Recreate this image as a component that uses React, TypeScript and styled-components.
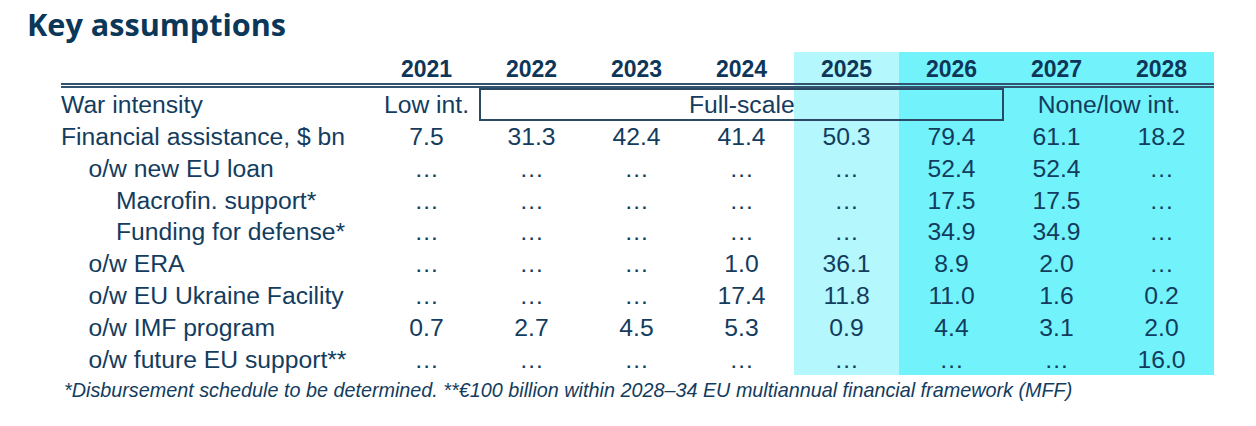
import React from 'react';
import styled, { createGlobalStyle } from 'styled-components';

const GlobalStyle = createGlobalStyle`
  html, body { margin: 0; padding: 0; background: #ffffff; }
  body { font-family: "Liberation Sans", Arial, sans-serif; }
`;

type Band = 'none' | 'light' | 'dark';
const bandColor: Record<Band, string> = {
  none: 'transparent',
  light: '#B4F7FC',
  dark: '#72F3FB',
};

const Page = styled.div`
  width: 1256px;
  height: 426px;
  overflow: hidden;
  padding-top: 6px;
  box-sizing: border-box;
`;

const Title = styled.h1`
  margin: 0 0 0 27px;
  font-family: "Open Sans", sans-serif;
  font-weight: 700;
  font-size: 30.6px;
  line-height: 36px;
  color: #0b3759;
`;

const Table = styled.div`
  margin: 10px 0 0 61px;
  display: grid;
  grid-template-columns: 313px repeat(8, 105px);
  color: #133c5e;
  font-size: 24.7px;
`;

const HeadCell = styled.div<{ $band: Band }>`
  height: 36px;
  box-sizing: border-box;
  padding-top: 3px;
  line-height: 28px;
  font-size: 23px;
  font-weight: 700;
  text-align: center;
  color: #0e3658;
  background: ${(p) => bandColor[p.$band]};
  border-bottom: 5px double #34536f;
`;

const Cell = styled.div<{ $band: Band; $tall?: boolean; $span?: number }>`
  height: ${(p) => (p.$tall ? '33px' : '31.8px')};
  line-height: ${(p) => (p.$tall ? '33px' : '31.8px')};
  box-sizing: border-box;
  text-align: center;
  white-space: nowrap;
  background: ${(p) => bandColor[p.$band]};
  grid-column: span ${(p) => p.$span ?? 1};
`;

const Label = styled.div<{ $indent: number; $tall?: boolean }>`
  height: ${(p) => (p.$tall ? '33px' : '31.8px')};
  line-height: ${(p) => (p.$tall ? '33px' : '31.8px')};
  padding-left: ${(p) => p.$indent * 27.5}px;
  white-space: nowrap;
`;

const BoxCell = styled.div<{ $band: Band; $first?: boolean; $last?: boolean }>`
  height: 33px;
  line-height: 29px;
  box-sizing: border-box;
  text-align: center;
  white-space: nowrap;
  background: ${(p) => bandColor[p.$band]};
  border-top: 2px solid #2b4964;
  border-bottom: 2px solid #2b4964;
  border-left: ${(p) => (p.$first ? '2px solid #2b4964' : 'none')};
  border-right: ${(p) => (p.$last ? '2px solid #2b4964' : 'none')};
`;

const Footnote = styled.p`
  margin: 2px 0 0 64px;
  font-style: italic;
  font-size: 19.8px;
  line-height: 26px;
  color: #133c5e;
  white-space: nowrap;
`;

const years = ['2021', '2022', '2023', '2024', '2025', '2026', '2027', '2028'];
const bands: Band[] = ['none', 'none', 'none', 'none', 'light', 'dark', 'dark', 'dark'];
const E = '…';

const rows: { label: string; indent: number; values: string[] }[] = [
  { label: 'Financial assistance, $ bn', indent: 0, values: ['7.5', '31.3', '42.4', '41.4', '50.3', '79.4', '61.1', '18.2'] },
  { label: 'o/w new EU loan', indent: 1, values: [E, E, E, E, E, '52.4', '52.4', E] },
  { label: 'Macrofin. support*', indent: 2, values: [E, E, E, E, E, '17.5', '17.5', E] },
  { label: 'Funding for defense*', indent: 2, values: [E, E, E, E, E, '34.9', '34.9', E] },
  { label: 'o/w ERA', indent: 1, values: [E, E, E, '1.0', '36.1', '8.9', '2.0', E] },
  { label: 'o/w EU Ukraine Facility', indent: 1, values: [E, E, E, '17.4', '11.8', '11.0', '1.6', '0.2'] },
  { label: 'o/w IMF program', indent: 1, values: ['0.7', '2.7', '4.5', '5.3', '0.9', '4.4', '3.1', '2.0'] },
  { label: 'o/w future EU support**', indent: 1, values: [E, E, E, E, E, E, E, '16.0'] },
];

export default function App() {
  return (
    <Page>
      <GlobalStyle />
      <Title>Key assumptions</Title>
      <Table>
        <HeadCell $band="none" />
        {years.map((y, i) => (
          <HeadCell key={y} $band={bands[i]}>{y}</HeadCell>
        ))}

        <Label $indent={0} $tall>War intensity</Label>
        <Cell $band="none" $tall>Low int.</Cell>
        <BoxCell $band="none" $first />
        <BoxCell $band="none" />
        <BoxCell $band="none">Full-scale</BoxCell>
        <BoxCell $band="light" />
        <BoxCell $band="dark" $last />
        <Cell $band="dark" $tall $span={2}>None/low int.</Cell>

        {rows.map((r) => (
          <React.Fragment key={r.label}>
            <Label $indent={r.indent}>{r.label}</Label>
            {r.values.map((v, i) => (
              <Cell key={i} $band={bands[i]}>{v}</Cell>
            ))}
          </React.Fragment>
        ))}
      </Table>
      <Footnote>
        *Disbursement schedule to be determined. **€100 billion within 2028–34 EU multiannual financial framework (MFF)
      </Footnote>
    </Page>
  );
}
